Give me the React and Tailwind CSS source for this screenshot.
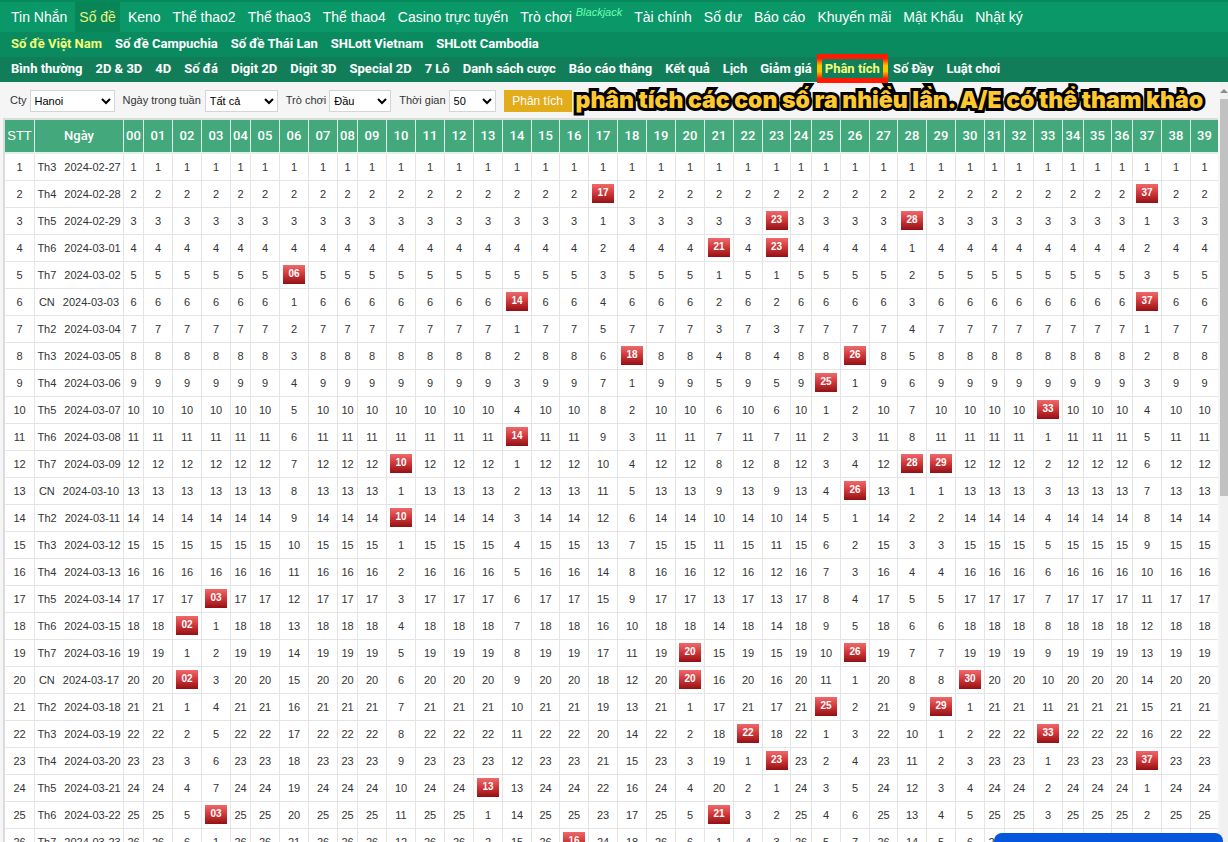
import { useState } from "react"

const mainMenu = [
  "Tin Nhắn", "Số đề", "Keno", "Thể thao2", "Thể thao3", "Thể thao4", "Casino trực tuyến", "Trò chơi",
  "Tài chính", "Số dư", "Báo cáo", "Khuyến mãi", "Mật Khẩu", "Nhật ký",
]

const regions = ["Số đề Việt Nam", "Số đề Campuchia", "Số đề Thái Lan", "SHLott Vietnam", "SHLott Cambodia"]

const subMenu = [
  "Bình thường", "2D & 3D", "4D", "Số đá", "Digit 2D", "Digit 3D", "Special 2D", "7 Lô", "Danh sách cược",
  "Báo cáo thắng", "Kết quả", "Lịch", "Giảm giá", "Phân tích", "Số Đầy", "Luật chơi",
]

const weekdays = ["CN", "Th2", "Th3", "Th4", "Th5", "Th6", "Th7"]

// numbers drawn on each day, starting from 2024-02-27
const draws = [
  [], [17, 37], [23, 28], [21, 23], [6], [14, 37], [], [18, 26], [25], [33], [14], [10, 28, 29], [26],
  [10], [], [], [3], [2], [20, 26], [2, 20, 30], [25, 29], [22, 33], [23, 37], [13], [3, 21], [16],
]

const numbers = Array.from({ length: 40 }, (_, i) => i)

const colWidth = (n) => {
  if ([0, 4, 8, 31].includes(n)) return "w-5"
  if ([24, 34, 36].includes(n)) return "w-[21px]"
  if ([15, 23, 27, 35].includes(n)) return "w-7"
  if (n === 39) return "w-[27px]"
  return "w-[29px]"
}

const pad = (n) => String(n).padStart(2, "0")

// every cell counts the days since its number last came up
const buildRows = () => {
  const counters = numbers.map(() => 0)
  return draws.map((hits, i) => {
    const date = new Date(Date.UTC(2024, 1, 27 + i))
    const cells = numbers.map((n) => {
      const hit = hits.includes(n)
      counters[n] = hit ? 0 : counters[n] + 1
      return { n, hit, days: counters[n] }
    })
    return {
      id: i + 1,
      weekday: weekdays[date.getUTCDay()],
      date: date.toISOString().slice(0, 10),
      cells,
    }
  })
}

const rows = buildRows()

const Filter = ({ id, label, options, width, gap }) => (
  <div className={`flex items-center ${gap}`}>
    <label htmlFor={id}>{label}</label>
    <select id={id} className={`h-[22px] border border-[#d5d5d5] bg-white text-black ${width}`}>
      {options.map((option) => <option key={option}>{option}</option>)}
    </select>
  </div>
)

const Header = () => (
  <header className="text-white whitespace-nowrap">
    <nav className="flex h-8 items-stretch border-t-2 border-[#078a5b] bg-[#0a9868] pl-[7px] text-sm">
      {mainMenu.map((item) => (
        <a
          key={item}
          href="#"
          className={`mr-1 flex items-center px-1 ${item === "Số đề" ? "bg-[#088657] text-[#e6f580]" : ""}`}
        >
          {item}
          {item === "Trò chơi" && <sup className="ml-1 text-[11px] italic text-[#6dffae]">Blackjack</sup>}
        </a>
      ))}
    </nav>
    <nav className="flex h-[25px] items-center gap-[13px] bg-[#0a8b5f] pb-0.5 pl-[11px] font-[Roboto,sans-serif] text-[13px] font-bold">
      {regions.map((item, i) => (
        <a key={item} href="#" className={i === 0 ? "text-[#f5fa78]" : ""}>{item}</a>
      ))}
    </nav>
    <nav className="flex h-[25px] items-center gap-[13px] bg-[#127e59] pb-0.5 pl-[11px] font-[Roboto,sans-serif] text-[13px] font-bold">
      {subMenu.map((item) => item === "Phân tích" ? (
        <a key={item} href="#" className="relative text-[#f5fa78]">
          {item}
          <span className="absolute -inset-x-2 -inset-y-[5px] border-5 [border-image:linear-gradient(#ff1a00_15%,#ffc400_40%,#ffc400_60%,#ff1a00_85%)_5]" />
        </a>
      ) : (
        <a key={item} href="#">{item}</a>
      ))}
    </nav>
  </header>
)

const Toolbar = ({ onSubmit }) => (
  <form onSubmit={onSubmit} className="flex h-9 items-center whitespace-nowrap pl-[10px] pt-px text-[11px] text-[#333]">
    <div className="flex items-center gap-2">
      <Filter id="company" label="Cty" options={["Hanoi"]} width="w-[85px]" gap="gap-[3px]" />
      <Filter id="weekday" label="Ngày trong tuần" options={["Tất cả"]} width="w-[73px]" gap="gap-1" />
      <Filter id="game" label="Trò chơi" options={["Đầu"]} width="w-[62px]" gap="gap-[3px]" />
      <Filter id="range" label="Thời gian" options={["50"]} width="w-[47px]" gap="gap-[3px]" />
      <button className="h-[22px] w-[68px] bg-[#e2ac1a] text-xs text-white">Phân tích</button>
    </div>
    <p className="ml-1 font-[Inter,sans-serif] text-[23px] font-black text-[#fdc830] [-webkit-text-stroke:6px_#000] [paint-order:stroke_fill]">
      phân tích các con số ra nhiều lần. A/E có thể tham khảo
    </p>
  </form>
)

const StatsTable = () => (
  <table className="w-full table-fixed border-separate border-spacing-0 bg-white text-center text-[11px] text-[#333]">
    <colgroup>
      <col className="w-[30px]" />
      <col className="w-[89px]" />
      {numbers.map((n) => <col key={n} className={colWidth(n)} />)}
    </colgroup>
    <thead className="bg-[#43a87b] text-[13px] text-white">
      <tr>
        <th className="h-[34px] border-r border-b-2 border-[#dff3e9] font-normal">STT</th>
        <th className="border-r border-b-2 border-[#dff3e9] font-[Roboto,sans-serif] font-medium">Ngày</th>
        {numbers.map((n) => (
          <th key={n} className="border-r border-b-2 border-[#dff3e9] font-[Roboto,sans-serif] font-medium last:border-r-0">
            {pad(n)}
          </th>
        ))}
      </tr>
    </thead>
    <tbody>
      {rows.map((row) => (
        <tr key={row.id}>
          <td className="h-[27px] border-r border-b border-[#e4e4e4]">{row.id}</td>
          <td className="border-r border-b border-[#e4e4e4]">
            <div className="flex justify-center gap-2 whitespace-nowrap">
              <span>{row.weekday}</span>
              <span>{row.date}</span>
            </div>
          </td>
          {row.cells.map(({ n, hit, days }) => (
            <td key={n} className="border-r border-b border-[#e4e4e4] last:border-r-0">
              {hit ? (
                <span className="mx-auto mb-px block h-[19px] w-[22px] bg-linear-to-b from-[#f0686a] via-[#cf3539] to-[#930f13] text-[10px] leading-[18px] font-bold text-white">
                  {pad(n)}
                </span>
              ) : days}
            </td>
          ))}
        </tr>
      ))}
    </tbody>
  </table>
)

const App = () => {
  const [chatOpen, setChatOpen] = useState(false)

  return (
    <div className="relative flex h-screen flex-col overflow-hidden bg-[#f5f5f5] font-['Liberation_Sans',Arial,sans-serif]">
      <Header />
      <main className="flex min-h-0 flex-1">
        <div className="min-w-0 flex-1">
          <Toolbar onSubmit={(e) => e.preventDefault()} />
          <div className="ml-[3px] mr-0.5 border-t-2 border-l-2 border-[#dcdcdc]">
            <StatsTable />
          </div>
        </div>
        <div className="flex w-2 flex-col items-center bg-[#f1f1f1]" aria-hidden="true">
          <svg viewBox="0 0 8 17" className="h-[17px] w-2 fill-[#8a8a8a]"><path d="M4 7 8 11H0z" /></svg>
          <div className="h-[397px] w-full bg-[#c1c1c1]" />
        </div>
      </main>
      <button
        aria-label="Chat"
        aria-expanded={chatOpen}
        onClick={() => setChatOpen(!chatOpen)}
        className="absolute right-[5px] bottom-0 h-[9px] w-[229px] rounded-t-lg bg-[#0457dd]"
      />
    </div>
  )
}

export default App
